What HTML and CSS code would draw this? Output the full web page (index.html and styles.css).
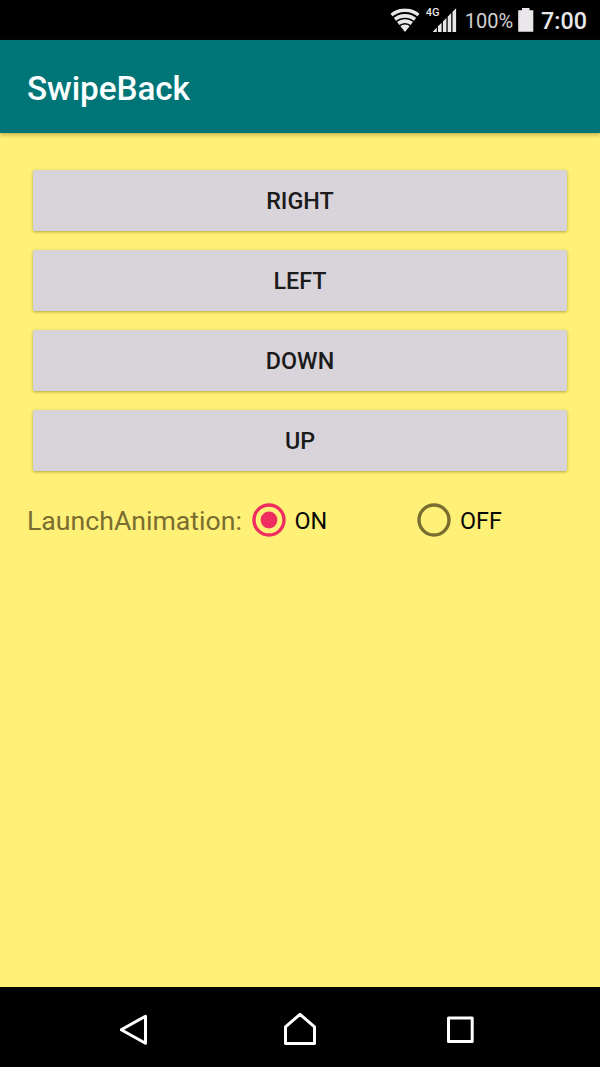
FILE: index.html
```html
<!DOCTYPE html>
<html lang="en">
<head>
<meta charset="utf-8">
<title>SwipeBack</title>
<link rel="stylesheet" href="styles.css">
</head>
<body>
<div class="screen">
  <div class="status-bar">
    <svg class="wifi" width="30" height="24" viewBox="0 0 30 24">
      <clipPath id="fan"><path d="M15 24 L0.3 5.6 Q6.5 0.2 15 0.2 T29.7 5.6Z"/></clipPath>
      <g clip-path="url(#fan)">
        <circle class="dot" cx="15" cy="24" r="7.6"/>
        <circle class="wave" cx="15" cy="24" r="10.9"/>
        <circle class="wave" cx="15" cy="24" r="16.1"/>
        <circle class="wave" cx="15" cy="24" r="21.7"/>
      </g>
    </svg>
    <div class="cell">
      <span class="network">4G</span>
      <svg class="signal" width="25" height="24" viewBox="0 0 25 24">
        <path d="M0.6 24 L4.8 19.5 V24Z M6 24 V18.3 L9.6 14.8 V24Z M10.9 24 V13.5 L14.4 9.9 V24Z M15.7 24 V8.7 L19.2 5.1 V24Z M20.5 24 V3.8 L24.1 0.2 V24Z"/>
      </svg>
    </div>
    <span class="percent">100%</span>
    <svg class="battery" width="16" height="24" viewBox="0 0 16 24">
      <path d="M4 0 H11.5 V2.2 H15.3 V23.7 H0.2 V2.2 H4Z"/>
    </svg>
    <span class="clock">7:00</span>
  </div>
  <header class="app-bar"><h1 class="title">SwipeBack</h1></header>
  <main class="content">
    <button class="button">RIGHT</button>
    <button class="button">LEFT</button>
    <button class="button">DOWN</button>
    <button class="button">UP</button>
    <div class="options">
      <span class="label">LaunchAnimation:</span>
      <label class="option">
        <svg width="36" height="36" viewBox="0 0 36 36">
          <circle class="ring ring-on" cx="18" cy="18" r="15"/>
          <circle class="ring-dot" cx="18" cy="18" r="8.4"/>
        </svg>
        <span>ON</span>
      </label>
      <label class="option">
        <svg width="36" height="36" viewBox="0 0 36 36">
          <circle class="ring ring-off" cx="18" cy="18" r="15"/>
        </svg>
        <span>OFF</span>
      </label>
    </div>
  </main>
  <nav class="nav-bar">
    <svg class="nav-icon" width="40" height="40" viewBox="0 0 40 40"><path d="M25.5 6.2 V33.3 L1.2 19.7Z"/></svg>
    <svg class="nav-icon" width="40" height="40" viewBox="0 0 40 40"><path d="M5.5 33.5 V16.8 L20 4.3 L34.5 16.8 V33.5Z"/></svg>
    <svg class="nav-icon" width="40" height="40" viewBox="0 0 40 40"><path d="M8.5 8 H32.2 V31.5 H8.5Z"/></svg>
  </nav>
</div>
</body>
</html>
```
FILE: styles.css
```css
* { box-sizing: border-box; }
body { margin: 0; font-family: Roboto, sans-serif; }
.screen {
  width: 600px;
  height: 1067px;
  display: flex;
  flex-direction: column;
  background: #fff078;
  overflow: hidden;
}
.status-bar {
  height: 40px;
  flex: none;
  display: flex;
  align-items: center;
  justify-content: flex-end;
  padding-right: 13px;
  background: #000;
  color: #e9e7ea;
}
.status-bar svg { fill: #e9e7ea; flex: none; display: block; }
.wifi .wave { fill: none; stroke: #e9e7ea; stroke-width: 3.6; }
.cell { position: relative; margin-left: 12px; }
.network {
  position: absolute;
  left: -6px;
  top: -2px;
  font-size: 11px;
  line-height: 13px;
  font-weight: 500;
}
.percent { margin-left: 8px; padding-top: 1px; font-size: 20px; color: #d2d0d3; }
.battery { margin-left: 5px; }
.clock { margin-left: 7px; padding-top: 1px; font-size: 23.33px; font-weight: 500; }
.app-bar {
  height: 93px;
  flex: none;
  display: flex;
  align-items: center;
  padding: 4px 27px 0;
  background: #007577;
  box-shadow: 0 2px 4px rgba(110, 80, 0, 0.4);
}
.title { margin: 0; font-size: 33.33px; font-weight: 500; letter-spacing: -0.1px; color: #fafefe; }
.content {
  flex: 1;
  display: flex;
  flex-direction: column;
  gap: 19px;
  padding: 37px 33px 0;
}
.button {
  height: 61px;
  flex: none;
  border: 0;
  border-radius: 2px;
  padding: 1px 0 0;
  background: #d8d4d9;
  color: #1c1b1c;
  font: 500 23.33px Roboto, sans-serif;
  box-shadow: 0 1px 3px rgba(100, 90, 0, 0.5);
}
.options {
  display: flex;
  align-items: center;
  height: 60px;
  margin: 1px 0 0 -6px;
}
.label { width: 224.5px; flex: none; font-size: 26.67px; color: #7a6d30; }
.option {
  width: 165.5px;
  flex: none;
  display: flex;
  align-items: center;
  gap: 8px;
  font-size: 23.33px;
  color: #080804;
}
.option svg { margin: 0 0 2px -1px; flex: none; }
.ring { fill: none; stroke-width: 3.4; }
.ring-on { stroke: #ee2e60; }
.ring-off { stroke: #7a6d30; }
.ring-dot { fill: #ee2e60; }
.nav-bar {
  height: 80px;
  flex: none;
  display: flex;
  align-items: center;
  justify-content: center;
  gap: 120px;
  padding-top: 5px;
  background: #000;
}
.nav-icon { fill: none; stroke: #fff; stroke-width: 3; stroke-linejoin: round; }
```
